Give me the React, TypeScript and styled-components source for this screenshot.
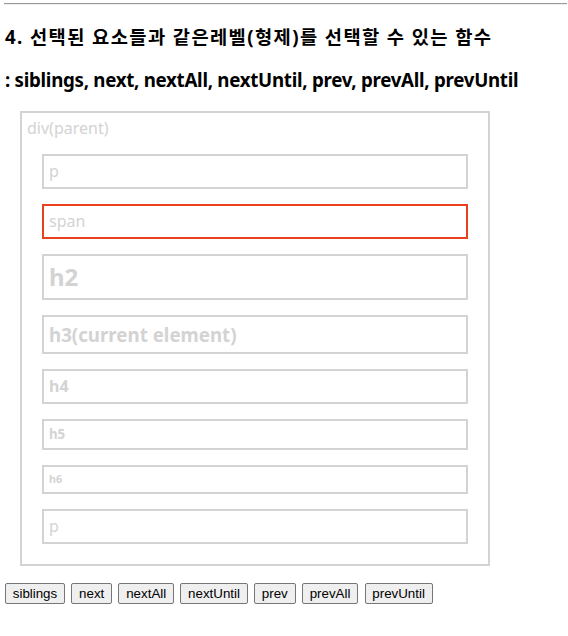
import React from "react";
import styled, { createGlobalStyle } from "styled-components";

const GlobalStyle = createGlobalStyle`
  html, body {
    margin: 0;
    padding: 0;
    background: #ffffff;
  }
  body {
    font-family: "Noto Sans", "Noto Sans CJK KR", sans-serif;
    color: #000000;
  }
`;

const Page = styled.div`
  padding: 0 0 24px 5px;
`;

const Rule = styled.hr`
  height: 0;
  margin: 3px 1px 0 -1px;
  border: 0;
  border-top: 1px solid #9a9a9a;
  border-bottom: 1px solid #eeeeee;
`;

const Heading = styled.h3<{ $spacing: number }>`
  font-family: "Noto Sans", "Noto Sans CJK KR", sans-serif;
  font-size: 18.72px;
  font-weight: 700;
  line-height: 25px;
  margin: 18.72px 0;
  letter-spacing: ${(p) => p.$spacing}px;
  white-space: nowrap;
`;

const Parent = styled.div`
  box-sizing: border-box;
  width: 470px;
  margin-left: 15px;
  padding: 5px;
  border: 2px solid #d3d3d3;
  color: #d3d3d3;
`;

const ParentLabel = styled.div`
  font-size: 16px;
  line-height: 21px;
`;

const SiblingList = styled.div`
  display: flex;
  flex-direction: column;
  gap: 15px;
  margin: 15px;
`;

const Sibling = styled.div<{ $size: number; $lh: number; $bold?: boolean; $active?: boolean }>`
  padding: 5px;
  border: 2px solid ${(p) => (p.$active ? "#e9411e" : "#d3d3d3")};
  color: #d3d3d3;
  font-size: ${(p) => p.$size}px;
  line-height: ${(p) => p.$lh}px;
  font-weight: ${(p) => (p.$bold ? 700 : 400)};
`;

const ButtonRow = styled.div`
  display: flex;
  gap: 6.4px;
  margin-top: 17px;
`;

const Button = styled.button`
  font-family: "Liberation Sans", Arial, sans-serif;
  font-size: 13.333px;
  line-height: 15px;
  padding: 2px 6.75px;
  color: #000000;
  background: #efefef;
  border: 1px solid #767676;
  border-radius: 2px;
  cursor: pointer;
`;

const items: { label: string; size: number; lh: number; bold?: boolean; active?: boolean }[] = [
  { label: "p", size: 16, lh: 21 },
  { label: "span", size: 16, lh: 21, active: true },
  { label: "h2", size: 24, lh: 32, bold: true },
  { label: "h3(current element)", size: 18.72, lh: 25, bold: true },
  { label: "h4", size: 16, lh: 21, bold: true },
  { label: "h5", size: 13.28, lh: 17, bold: true },
  { label: "h6", size: 10.72, lh: 15, bold: true },
  { label: "p", size: 16, lh: 21 },
];

const buttons = ["siblings", "next", "nextAll", "nextUntil", "prev", "prevAll", "prevUntil"];

export default function App() {
  return (
    <>
      <GlobalStyle />
      <Page>
        <Rule />
        <Heading $spacing={1.4}>4. 선택된 요소들과 같은레벨(형제)를 선택할 수 있는 함수</Heading>
        <Heading $spacing={-0.28}>: siblings, next, nextAll, nextUntil, prev, prevAll, prevUntil</Heading>
        <Parent>
          <ParentLabel>div(parent)</ParentLabel>
          <SiblingList>
            {items.map((it, i) => (
              <Sibling key={i} $size={it.size} $lh={it.lh} $bold={it.bold} $active={it.active}>
                {it.label}
              </Sibling>
            ))}
          </SiblingList>
        </Parent>
        <ButtonRow>
          {buttons.map((b) => (
            <Button key={b} type="button">
              {b}
            </Button>
          ))}
        </ButtonRow>
      </Page>
    </>
  );
}
